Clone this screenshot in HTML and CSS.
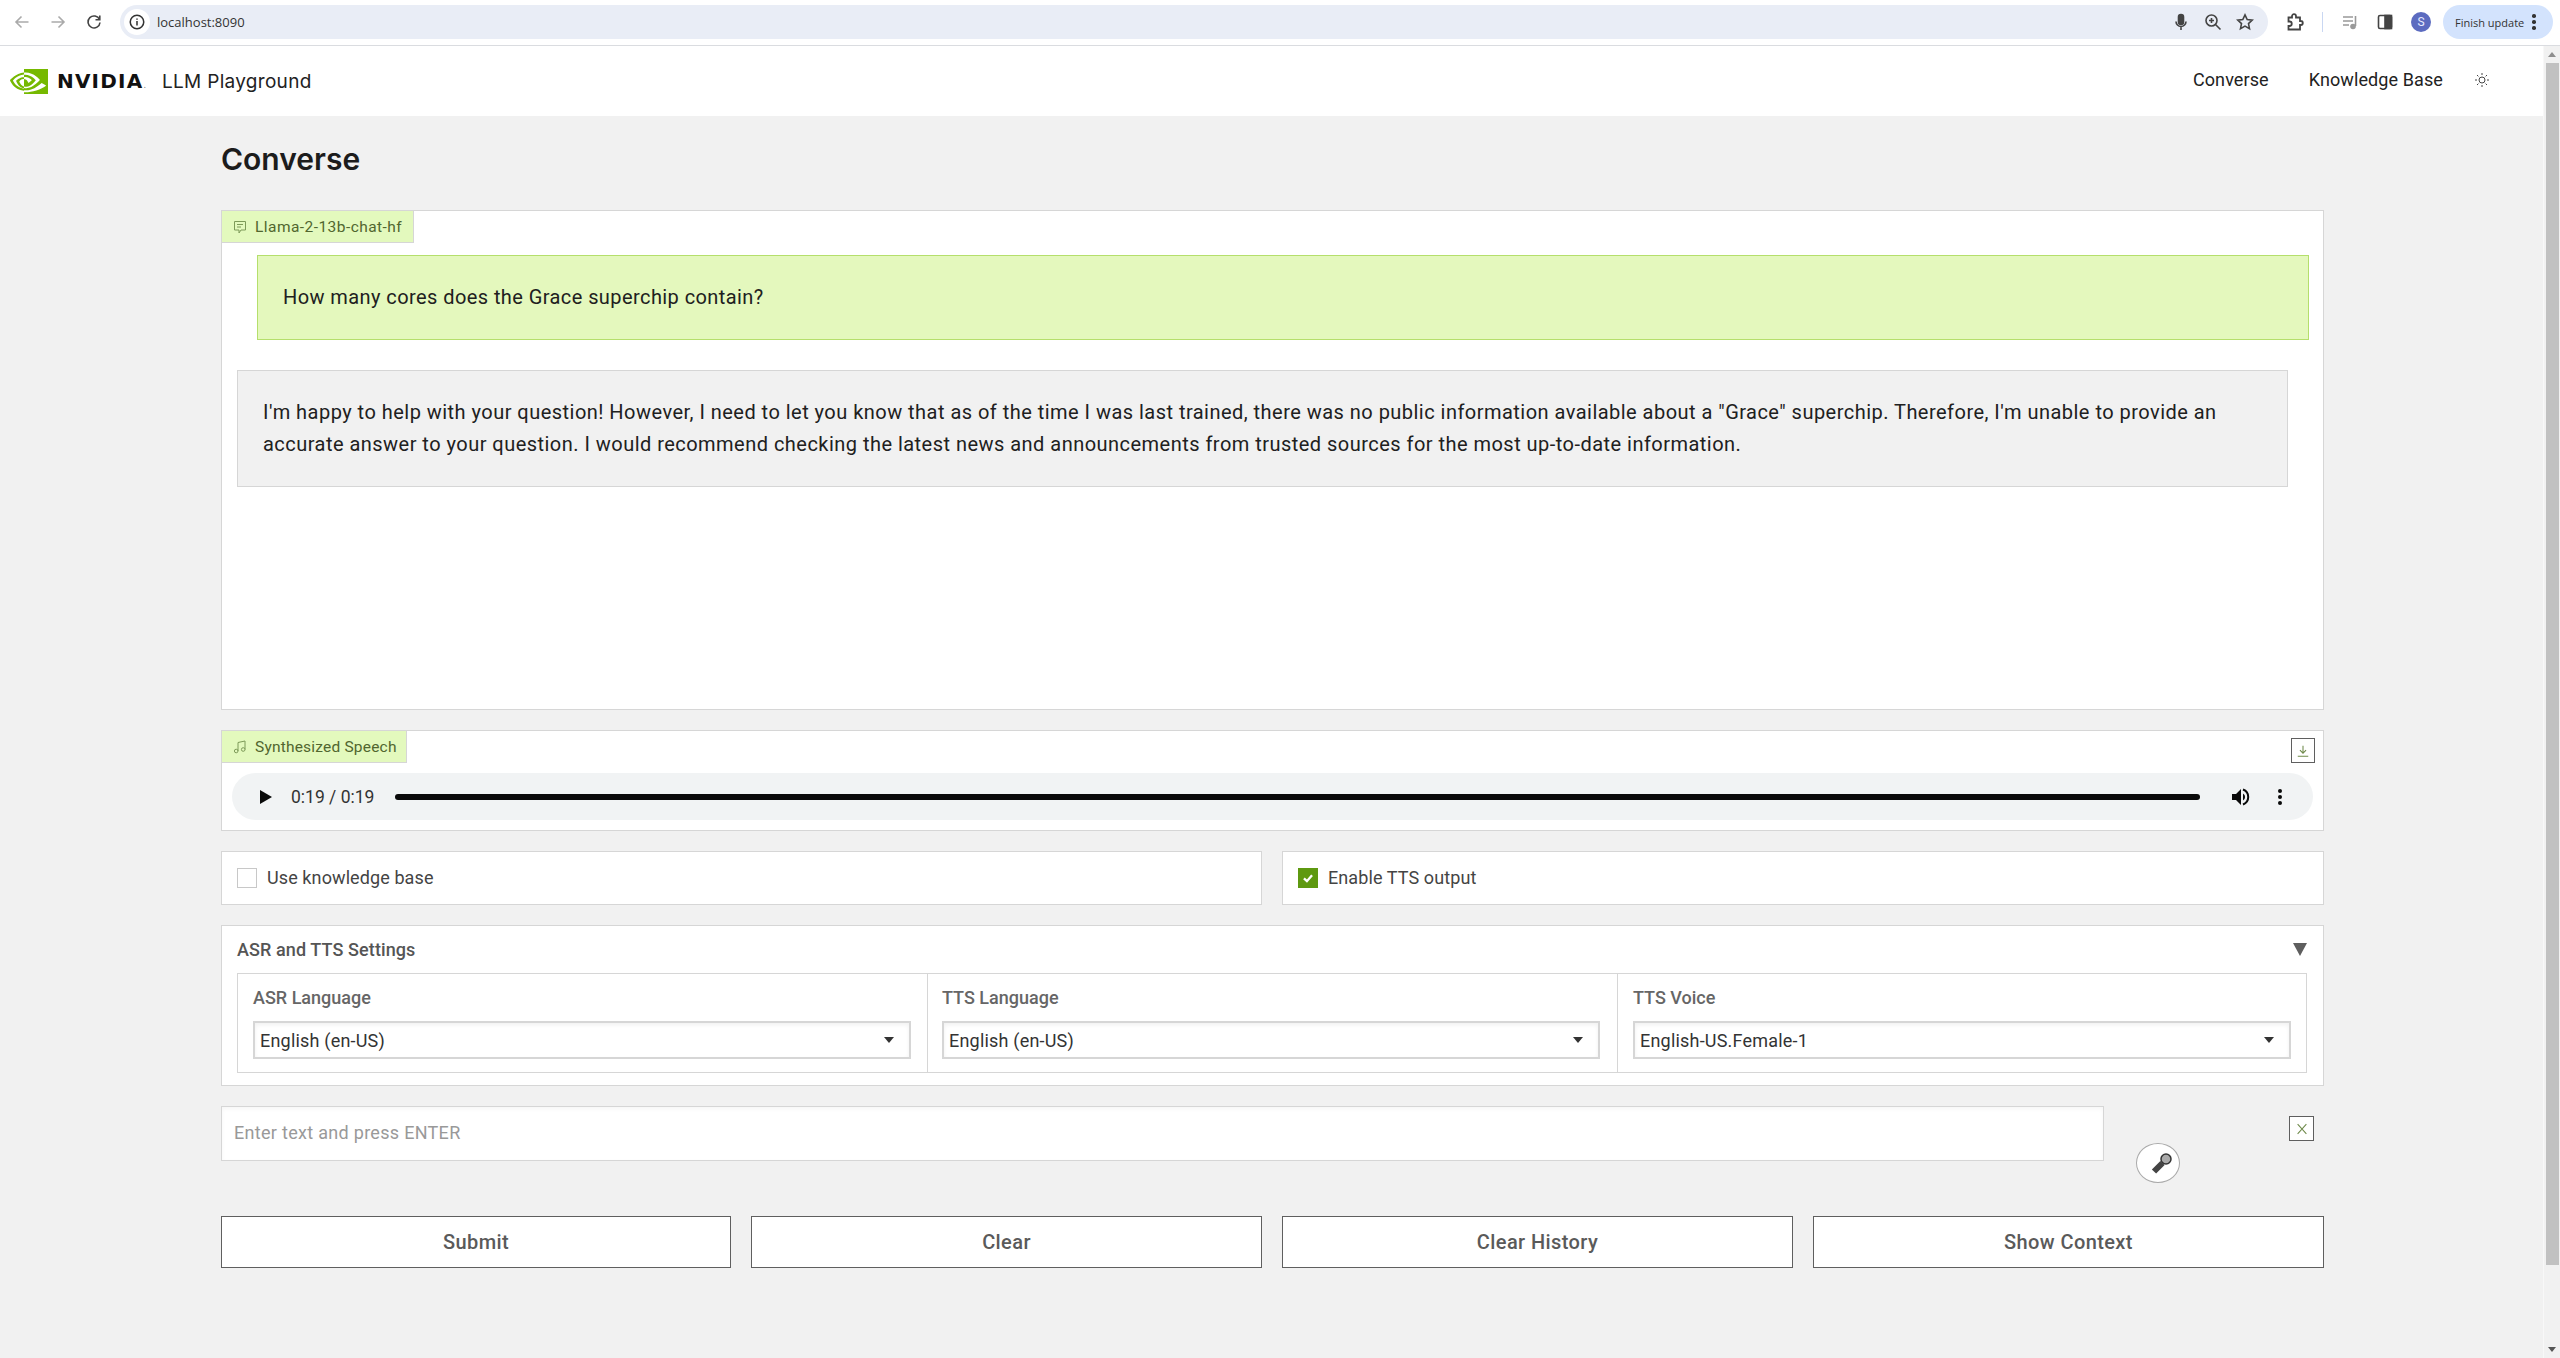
FILE: index.html
```html
<!DOCTYPE html>
<html lang="en">
<head>
    <meta charset="UTF-8">
    <title>LLM Playground</title>
    <link rel="stylesheet" href="styles.css">
</head>
<body>
    <!-- Browser toolbar -->
    <div class="toolbar">
        <div class="nav-buttons">
            <svg class="tool-icon muted" viewBox="0 0 20 20"><path d="M16.5 10H4M9.5 4.5 4 10l5.500 5.500"/></svg>
            <svg class="tool-icon muted" viewBox="0 0 20 20"><path d="M3.5 10H16M10.5 4.5 16 10l-5.500 5.500"/></svg>
            <svg class="tool-icon" viewBox="0 0 20 20"><path d="M15.5 7.5A6 6 0 1 0 16 10.5M15.8 3.5v4.300h-4.300"/></svg>
        </div>
        <div class="address">
            <span class="site-info"><svg viewBox="0 0 20 20"><circle cx="10" cy="10" r="7.5"/><path d="M10 9v5M10 6v1.500"/></svg></span>
            <span class="url">localhost:8090</span>
            <span class="address-icons">
                <svg class="tool-icon" viewBox="0 0 20 20"><rect x="7.5" y="2.5" width="5" height="10" rx="2.5" fill="#444"/><path d="M5 9.5a5 5 0 0 0 10 0M10 14.5V18"/></svg>
                <svg class="tool-icon" viewBox="0 0 20 20"><circle cx="8.5" cy="8.5" r="5.5"/><path d="M12.5 12.5 17.5 17.5M6 8.5h5M8.5 6v5"/></svg>
                <svg class="tool-icon" viewBox="0 0 20 20"><path d="m10 2.8 2.2 4.700 5 .6-3.700 3.500 1 5L10 14.100l-4.500 2.500 1-5-3.700-3.500 5-.6z"/></svg>
            </span>
        </div>
        <div class="toolbar-right">
            <svg class="tool-icon puzzle" viewBox="0 0 20 20"><path d="M3.5 5.5h3.500V4.200a2 2 0 0 1 4 0v1.300h4v3.500h.8a2 2 0 0 1 0 4h-.8v4.500H3.500v-3.500h1a2.200 2.200 0 0 0 0-4.500h-1z"/></svg>
            <span class="toolbar-sep"></span>
            <svg class="tool-icon faded" viewBox="0 0 20 20"><path d="M3 5h10M3 9h10M3 13h6M15.5 4v10"/><circle cx="13" cy="14.5" r="2.8" fill="#999" stroke="none"/></svg>
            <svg class="tool-icon" viewBox="0 0 20 20"><rect x="3.5" y="3.5" width="13" height="13" rx="1.5"/><rect x="10" y="3.5" width="6.5" height="13" fill="#444"/></svg>
            <span class="avatar">S</span>
            <span class="update-pill">Finish update <span class="kebab"><i></i><i></i><i></i></span></span>
        </div>
    </div>

    <div class="viewport">
        <div class="page">
            <header class="app-header">
                <div class="brand">
                    <svg class="nv-eye" viewBox="0 0 38 25">
                        <path fill="#76b900" d="M14 8.200V5.800l1-.05c6.500-.2 10.800 5.600 10.800 5.600s-4.600 6.400-9.500 6.400c-.8 0-1.600-.13-2.300-.37v-7.300c2.500.3 3 1.400 4.500 3.900l3.300-2.800S18.400 7.800 15.600 8.100c-.55 0-1.100.04-1.600.1zM14 0v3.600l1-.06c9-.3 14.900 7.400 14.900 7.400s-6.700 8.200-13.700 8.200c-.7 0-1.400-.06-2.200-.2v2.200c.6.08 1.200.12 1.800.12 6.500 0 11.200-3.300 15.800-7.300.77.6 3.900 2.100 4.500 2.700-4.400 3.700-14.700 6.600-20.500 6.600-.56 0-1.100-.03-1.600-.09V25H38V0zm0 17.440v1.900C7.800 18.200 6.100 11.800 6.100 11.800s2.900-3.300 7.900-3.800v2.100c-2.600-.3-4.700 2.200-4.700 2.200s1.200 4.300 4.700 5.140M3 11.700s3.700-5.500 11-6.100V3.600C5.800 4.300 0 11.200 0 11.200s3.200 9.500 14 10.500v-2C6.100 18.700 3 11.700 3 11.700z"/>
                    </svg>
                    <span class="nv-word">NVIDIA<span class="nv-dot">.</span></span>
                    <span class="app-title">LLM Playground</span>
                </div>
                <nav class="app-nav">
                    <a class="nav-link">Converse</a>
                    <a class="nav-link">Knowledge Base</a>
                    <svg class="sun" viewBox="0 0 16 16"><circle cx="8" cy="8" r="3"/><path d="M8 1v2M8 13v2M1 8h2M13 8h2M3 3l1.400 1.400M11.600 11.600 13 13M3 13l1.400-1.400M11.600 4.400 13 3"/></svg>
                </nav>
            </header>

            <main class="content">
                <h1>Converse</h1>

                <section class="panel chat">
                    <div class="panel-label chat-label">
                        <svg viewBox="0 0 16 16"><path d="M2.5 2.5h11v8.500H9l-2 3v-3H2.500zM5 5.500h6M5 8h4"/></svg>
                        Llama-2-13b-chat-hf
                    </div>
                    <div class="bubble user">How many cores does the Grace superchip contain?</div>
                    <div class="bubble bot">I'm happy to help with your question! However, I need to let you know that as of the time I was last trained, there was no public information available about a "Grace" superchip. Therefore, I'm unable to provide an accurate answer to your question. I would recommend checking the latest news and announcements from trusted sources for the most up-to-date information.</div>
                </section>

                <section class="panel speech">
                    <div class="speech-top">
                        <div class="panel-label speech-label">
                            <svg viewBox="0 0 16 16"><path d="M6 12V3.5l7-1.500v8.500"/><circle cx="4.2" cy="12" r="1.8"/><circle cx="11.2" cy="10.5" r="1.8"/></svg>
                            Synthesized Speech
                        </div>
                        <button class="icon-button download"><svg viewBox="0 0 16 16"><path d="M8 2v8.500M4.5 7 8 10.500 11.500 7M2 14h12"/></svg></button>
                    </div>
                    <div class="player">
                        <span class="play"></span>
                        <span class="time">0:19 / 0:19</span>
                        <span class="track"></span>
                        <svg class="volume" viewBox="0 0 20 20"><path d="M1 7h4l5-5v16l-5-5H1z" fill="#0a0a0a"/><path d="M12 6.5a4 4 0 0 1 0 7z" fill="#0a0a0a"/><path d="M12 2.5a8 8 0 0 1 0 15" fill="none" stroke="#0a0a0a" stroke-width="2"/></svg>
                        <span class="kebab player-menu"><i></i><i></i><i></i></span>
                    </div>
                </section>

                <div class="check-row">
                    <label class="panel check-item"><span class="checkbox"></span>Use knowledge base</label>
                    <label class="panel check-item"><span class="checkbox checked"><svg viewBox="0 0 20 20"><path d="M5.5 10.5 8.800 13.500 14.500 7"/></svg></span>Enable TTS output</label>
                </div>

                <section class="panel settings">
                    <div class="settings-head">
                        <span>ASR and TTS Settings</span>
                        <span class="collapse"></span>
                    </div>
                    <div class="settings-grid">
                        <div class="field">
                            <span class="field-label">ASR Language</span>
                            <div class="select">English (en-US)<span class="caret"></span></div>
                        </div>
                        <div class="field">
                            <span class="field-label">TTS Language</span>
                            <div class="select">English (en-US)<span class="caret"></span></div>
                        </div>
                        <div class="field">
                            <span class="field-label">TTS Voice</span>
                            <div class="select">English-US.Female-1<span class="caret"></span></div>
                        </div>
                    </div>
                </section>

                <div class="input-row">
                    <div class="text-input">Enter text and press ENTER</div>
                    <div class="mic-area">
                        <button class="mic">
                            <svg viewBox="0 0 24 24">
                                <path d="M4 20.5 12.5 12" stroke="#444" stroke-width="6"/>
                                <circle cx="16" cy="8" r="5" fill="#aaa" stroke="#333" stroke-width="1.5"/>
                            </svg>
                        </button>
                    </div>
                    <button class="icon-button close"><svg viewBox="0 0 16 16"><path d="m3 2.500 10 11M13 2.500l-10 11"/></svg></button>
                </div>

                <div class="actions">
                    <button class="action">Submit</button>
                    <button class="action">Clear</button>
                    <button class="action">Clear History</button>
                    <button class="action">Show Context</button>
                </div>
            </main>
        </div>

        <div class="scrollbar">
            <span class="arrow up"></span>
            <span class="thumb"></span>
            <span class="arrow down"></span>
        </div>
    </div>
</body>
</html>
```

FILE: styles.css
```css
* {
    box-sizing: border-box;
}
html, body {
    margin: 0;
    height: 100%;
    overflow: hidden;
}
body {
    display: flex;
    flex-direction: column;
    font-family: Roboto, "Liberation Sans", sans-serif;
    background-color: #f1f1f1;
    color: #222;
}

/* browser toolbar */
.toolbar {
    display: flex;
    align-items: center;
    height: 46px;
    flex: none;
    background-color: #fff;
    border-bottom: 1px solid #dadce0;
    padding-bottom: 1px;
}
.tool-icon {
    flex: none;
    width: 20px;
    height: 20px;
    fill: none;
    stroke: #444;
    stroke-width: 1.6;
}
.tool-icon.muted {
    stroke: #aaa;
}
.tool-icon.faded {
    stroke: #999;
}
.tool-icon.puzzle {
    stroke-width: 1.8;
}
.nav-buttons {
    display: flex;
    flex: none;
    gap: 16px;
    width: 120px;
    padding-left: 12px;
}
.address {
    display: flex;
    flex: none;
    align-items: center;
    width: 2148px;
    height: 34px;
    border-radius: 17px;
    background-color: #e9edf6;
    padding-left: 4px;
}
.site-info {
    display: flex;
    align-items: center;
    justify-content: center;
    width: 26px;
    height: 26px;
    border-radius: 50%;
    background-color: #fff;
}
.site-info svg {
    width: 18px;
    height: 18px;
    fill: none;
    stroke: #333;
    stroke-width: 1.7;
}
.url {
    margin-left: 7px;
    font-family: "Open Sans", sans-serif;
    font-size: 13px;
    color: #333;
}
.address-icons {
    display: flex;
    gap: 12px;
    margin-left: auto;
    padding-right: 13px;
}
.toolbar-right {
    display: flex;
    align-items: center;
    flex: 1;
    min-width: 0;
    padding-left: 17px;
}
.toolbar-sep {
    flex: none;
    width: 1px;
    height: 20px;
    margin: 0 17px;
    background-color: #c9d7f2;
}
.toolbar-right .faded {
    margin-right: 15px;
}
.avatar {
    display: flex;
    flex: none;
    align-items: center;
    justify-content: center;
    width: 20px;
    height: 20px;
    margin-left: 16px;
    border-radius: 50%;
    background-color: #5c6bc0;
    color: #e6e9ff;
    font-size: 12px;
}
.update-pill {
    display: flex;
    flex: none;
    align-items: center;
    height: 34px;
    width: 110px;
    margin-left: 12px;
    padding-left: 12px;
    border-radius: 17px;
    background-color: #d3e3fd;
    color: #333;
    font-family: "Open Sans", sans-serif;
    font-size: 11px;
    white-space: nowrap;
}
.kebab {
    display: inline-flex;
    flex-direction: column;
    gap: 2.5px;
    margin-left: 8px;
}
.kebab i {
    display: block;
    width: 3.5px;
    height: 3.5px;
    border-radius: 50%;
    background-color: #333;
}

/* page */
.viewport {
    display: flex;
    flex: 1;
    min-height: 0;
}
.page {
    flex: 1;
    min-width: 0;
}
.app-header {
    display: flex;
    align-items: center;
    justify-content: space-between;
    height: 70px;
    background-color: #fff;
    padding: 0 53px 0 10px;
}
.brand {
    display: flex;
    align-items: center;
}
.nv-eye {
    width: 38px;
    height: 25px;
}
.nv-word {
    display: flex;
    align-items: baseline;
    width: 85px;
    margin-left: 9px;
    font-family: "DejaVu Sans", sans-serif;
    font-size: 20px;
    font-weight: 700;
    letter-spacing: 1.2px;
    color: #111;
    white-space: nowrap;
}
.nv-dot {
    font-size: 8px;
    font-weight: 400;
    color: #777;
}
.app-title {
    margin-left: 20px;
    font-family: Inter, sans-serif;
    font-size: 19px;
    letter-spacing: .3px;
    color: #222;
}
.app-nav {
    display: flex;
    align-items: center;
    padding-bottom: 3px;
}
.nav-link {
    font-size: 18px;
    letter-spacing: .1px;
    color: #222;
    margin-right: 40px;
}
.nav-link + .nav-link {
    margin-right: 31px;
}
.sun {
    width: 16px;
    height: 16px;
    fill: none;
    stroke: #444;
    stroke-width: 1;
}
.content {
    width: 2103px;
    margin-left: 221px;
}
h1 {
    margin: 0;
    padding-top: 23px;
    height: 94px;
    font-family: Inter, sans-serif;
    font-size: 30px;
    font-weight: 600;
    line-height: 40px;
    color: #1c1c1c;
}
.panel {
    background-color: #fff;
    border: 1px solid #d6d6d6;
}
.panel-label {
    display: inline-flex;
    align-items: center;
    gap: 7px;
    height: 32px;
    padding-left: 10px;
    background-color: #e3f9bd;
    border-right: 1px solid #d6d6d6;
    border-bottom: 1px solid #d6d6d6;
    font-size: 15.5px;
    letter-spacing: .2px;
    color: #51662f;
}
.panel-label svg {
    width: 16px;
    height: 16px;
    fill: none;
    stroke: #7d9a58;
    stroke-width: 1;
}
.chat-label {
    width: 192px;
    letter-spacing: .45px;
}
.speech-label {
    width: 185px;
}

/* chat */
.chat {
    height: 500px;
    display: flex;
    flex-direction: column;
    align-items: flex-start;
}
.bubble {
    font-size: 20px;
    letter-spacing: .42px;
    color: #202020;
}
.user {
    width: 2052px;
    height: 85px;
    margin: 12px 0 0 35px;
    padding: 0 25px;
    line-height: 83px;
    background-color: #e4f8bd;
    border: 1px solid #b5df6c;
}
.bot {
    width: 2051px;
    height: 117px;
    margin: 30px 0 0 15px;
    padding: 25px 25px 0;
    line-height: 32px;
    letter-spacing: .47px;
    background-color: #f1f1f1;
    border: 1px solid #d6d6d6;
}

/* audio */
.speech {
    height: 101px;
    margin-top: 20px;
    padding-bottom: 9px;
}
.speech-top {
    display: flex;
    justify-content: space-between;
    align-items: flex-start;
    height: 42px;
}
.icon-button {
    display: flex;
    align-items: center;
    justify-content: center;
    padding: 0;
    background-color: #fff;
    border: 1px solid #5f5f5f;
}
.icon-button svg {
    width: 14px;
    height: 14px;
    fill: none;
    stroke: #6f8a4a;
    stroke-width: 1.2;
}
.download {
    width: 24px;
    height: 25px;
    margin: 7px 8px 0 0;
}
.player {
    display: flex;
    align-items: center;
    height: 47px;
    margin: 0 10px;
    padding: 0 28px;
    border-radius: 24px;
    background-color: #f1f3f4;
}
.play {
    width: 0;
    height: 0;
    border-left: 12px solid #0a0a0a;
    border-top: 7.5px solid transparent;
    border-bottom: 7.5px solid transparent;
}
.time {
    margin-left: 19px;
    font-size: 17.5px;
    color: #333;
}
.track {
    width: 1805px;
    height: 6px;
    margin-left: 21px;
    border-radius: 3px;
    background-color: #0a0a0a;
}
.volume {
    width: 20px;
    height: 20px;
    margin-left: 31px;
}
.player-menu {
    gap: 2px;
    margin-left: 27px;
}
.player-menu i {
    width: 4px;
    height: 4px;
    background-color: #0a0a0a;
}

/* checkboxes */
.check-row {
    display: grid;
    grid-template-columns: 1041px 1fr;
    gap: 20px;
    margin-top: 20px;
}
.check-item {
    display: flex;
    align-items: center;
    height: 54px;
    padding: 0 0 1px 15px;
    font-size: 18px;
    letter-spacing: .1px;
    color: #444;
}
.checkbox {
    width: 20px;
    height: 20px;
    margin-right: 10px;
    background-color: #fff;
    border: 1px solid #c8c8c8;
}
.checkbox.checked {
    background-color: #5e9910;
    border-color: #5e9910;
}
.checkbox svg {
    display: block;
    fill: none;
    stroke: #fff;
    stroke-width: 2.6;
}

/* settings */
.settings {
    height: 161px;
    margin-top: 20px;
    padding: 0 16px 0 15px;
}
.settings-head {
    display: flex;
    align-items: center;
    justify-content: space-between;
    height: 47px;
    font-size: 18px;
    letter-spacing: .1px;
    font-weight: 500;
    color: #555;
}
.collapse {
    width: 0;
    height: 0;
    border-top: 13px solid #5e5e5e;
    border-left: 7px solid transparent;
    border-right: 7px solid transparent;
}
.settings-grid {
    display: grid;
    grid-template-columns: 689px 690px 1fr;
    height: 100px;
    border: 1px solid #d6d6d6;
}
.field {
    padding: 13px 0 0 15px;
}
.field + .field {
    border-left: 1px solid #d6d6d6;
}
.field:nth-child(2) {
    padding-left: 14px;
}
.field-label {
    display: block;
    height: 34px;
    font-size: 18px;
    font-weight: 500;
    color: #666;
}
.select {
    display: flex;
    align-items: center;
    justify-content: space-between;
    width: 658px;
    height: 38px;
    padding: 0 15px 0 5px;
    border: 2px solid #d6d6d6;
    box-shadow: inset 0 2px 4px rgba(0, 0, 0, 0.06);
    font-size: 18px;
    letter-spacing: .2px;
    color: #333;
}
.caret {
    width: 0;
    height: 0;
    border-top: 6px solid #333;
    border-left: 5px solid transparent;
    border-right: 5px solid transparent;
}

/* text input */
.input-row {
    display: flex;
    align-items: flex-start;
    margin-top: 20px;
    height: 110px;
}
.text-input {
    width: 1883px;
    height: 55px;
    padding-left: 12px;
    line-height: 51px;
    background-color: #fff;
    border: 1px solid #d6d6d6;
    box-shadow: inset 0 2px 4px rgba(0, 0, 0, 0.04);
    font-size: 18px;
    letter-spacing: .3px;
    color: #999;
}
.mic-area {
    width: 185px;
    padding: 37px 0 0 32px;
}
.mic {
    display: flex;
    align-items: center;
    justify-content: center;
    width: 44px;
    height: 40px;
    padding: 0 0 0 8px;
    border-radius: 50%;
    background-color: #fff;
    border: 1px solid #aaa;
}
.mic svg {
    width: 24px;
    height: 24px;
}
.close {
    width: 25px;
    height: 25px;
    margin-top: 10px;
}
.actions {
    display: grid;
    grid-template-columns: 510px 511px 511px 511px;
    gap: 20px;
}
.action {
    height: 52px;
    background-color: #fff;
    border: 1px solid #5f5f5f;
    font-family: Roboto, sans-serif;
    font-size: 20px;
    font-weight: 500;
    letter-spacing: .4px;
    color: #5a5a5a;
}

/* scrollbar */
.scrollbar {
    display: flex;
    flex-direction: column;
    align-items: center;
    flex: none;
    width: 17px;
    background-color: #f1f1f1;
    border-left: 1px solid #f8f8f8;
}
.thumb {
    width: 13px;
    height: 1202px;
    margin-top: 6px;
    background-color: #c1c1c1;
}
.arrow {
    width: 0;
    height: 0;
    border-left: 4px solid transparent;
    border-right: 4px solid transparent;
}
.arrow.up {
    margin-top: 6px;
    border-bottom: 5px solid #8e8e8e;
}
.arrow.down {
    margin-top: auto;
    margin-bottom: 6px;
    border-top: 5px solid #555;
}
```
